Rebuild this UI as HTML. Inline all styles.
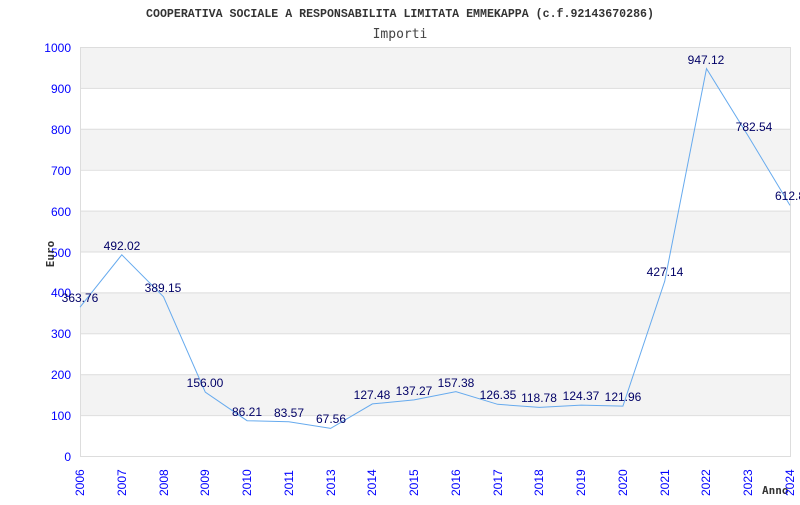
<!DOCTYPE html>
<html><head><style>
body{margin:0;background:#fff;width:800px;height:500px;overflow:hidden}
svg text{font-family:"Liberation Sans",sans-serif}
</style></head><body>
<svg width="800" height="500" xmlns="http://www.w3.org/2000/svg">
<text x="400" y="17" text-anchor="middle" style="font-family:'Liberation Mono',monospace" font-size="11.6" font-weight="bold" fill="#333">COOPERATIVA SOCIALE A RESPONSABILITA LIMITATA EMMEKAPPA (c.f.92143670286)</text>
<text x="400" y="38" text-anchor="middle" style="font-family:'DejaVu Sans Mono',monospace" font-size="13" fill="#444">Importi</text>
<g fill="#f3f3f3">
<rect x="80.5" y="47" width="710" height="40.9"/>
<rect x="80.5" y="128.8" width="710" height="40.9"/>
<rect x="80.5" y="210.6" width="710" height="40.9"/>
<rect x="80.5" y="292.4" width="710" height="40.9"/>
<rect x="80.5" y="374.2" width="710" height="40.9"/>
</g>
<g stroke="#dddddd" stroke-width="1">
<line x1="80" y1="47.5" x2="790" y2="47.5"/>
<line x1="80" y1="88.4" x2="790" y2="88.4"/>
<line x1="80" y1="129.3" x2="790" y2="129.3"/>
<line x1="80" y1="170.2" x2="790" y2="170.2"/>
<line x1="80" y1="211.1" x2="790" y2="211.1"/>
<line x1="80" y1="252" x2="790" y2="252"/>
<line x1="80" y1="292.9" x2="790" y2="292.9"/>
<line x1="80" y1="333.8" x2="790" y2="333.8"/>
<line x1="80" y1="374.7" x2="790" y2="374.7"/>
<line x1="80" y1="415.6" x2="790" y2="415.6"/>
<line x1="80" y1="456.5" x2="790" y2="456.5"/>
<line x1="80.5" y1="47" x2="80.5" y2="457"/>
<line x1="790.5" y1="47" x2="790.5" y2="457"/>
</g>
<g fill="#0000ff" font-size="12" text-anchor="end" style="font-family:'DejaVu Sans Mono',monospace">
<text x="71" y="52">1000</text><text x="71" y="93">900</text><text x="71" y="134">800</text><text x="71" y="175">700</text><text x="71" y="216">600</text><text x="71" y="257">500</text><text x="71" y="297">400</text><text x="71" y="338">300</text><text x="71" y="379">200</text><text x="71" y="420">100</text><text x="71" y="461">0</text>
</g>
<text transform="translate(54,254) rotate(-90)" text-anchor="middle" font-size="11" font-weight="bold" fill="#333" style="font-family:'DejaVu Sans Mono',monospace">Euro</text>
<text x="762" y="494" font-size="11" font-weight="bold" fill="#333" style="font-family:'DejaVu Sans Mono',monospace">Anno</text>
<g fill="#0000ff" font-size="12" style="font-family:'DejaVu Sans Mono',monospace">
<text transform="translate(84,496) rotate(-90)">2006</text>
<text transform="translate(126,496) rotate(-90)">2007</text>
<text transform="translate(168,496) rotate(-90)">2008</text>
<text transform="translate(209,496) rotate(-90)">2009</text>
<text transform="translate(251,496) rotate(-90)">2010</text>
<text transform="translate(293,496) rotate(-90)">2011</text>
<text transform="translate(335,496) rotate(-90)">2013</text>
<text transform="translate(376,496) rotate(-90)">2014</text>
<text transform="translate(418,496) rotate(-90)">2015</text>
<text transform="translate(460,496) rotate(-90)">2016</text>
<text transform="translate(502,496) rotate(-90)">2017</text>
<text transform="translate(543,496) rotate(-90)">2018</text>
<text transform="translate(585,496) rotate(-90)">2019</text>
<text transform="translate(627,496) rotate(-90)">2020</text>
<text transform="translate(669,496) rotate(-90)">2021</text>
<text transform="translate(710,496) rotate(-90)">2022</text>
<text transform="translate(752,496) rotate(-90)">2023</text>
<text transform="translate(794,496) rotate(-90)">2024</text>
</g>
<polyline fill="none" stroke="#66aaee" stroke-width="1" points="80,307.2 121.8,254.8 163.5,296.8 205.3,392.2 247.1,420.7 288.8,421.8 330.6,428.4 372.4,403.9 414.1,399.9 455.9,391.6 497.6,404.3 539.4,407.4 581.2,405.1 622.9,406.1 664.7,281.3 706.5,68.6 748.2,136 790,205.4"/>
<g fill="#000066" font-size="12" text-anchor="middle">
<text x="80" y="302">363.76</text>
<text x="122" y="250">492.02</text>
<text x="163" y="292">389.15</text>
<text x="205" y="387">156.00</text>
<text x="247" y="416">86.21</text>
<text x="289" y="417">83.57</text>
<text x="331" y="423">67.56</text>
<text x="372" y="399">127.48</text>
<text x="414" y="395">137.27</text>
<text x="456" y="387">157.38</text>
<text x="498" y="399">126.35</text>
<text x="539" y="402">118.78</text>
<text x="581" y="400">124.37</text>
<text x="623" y="401">121.96</text>
<text x="665" y="276">427.14</text>
<text x="706" y="64">947.12</text>
<text x="754" y="131">782.54</text>
<text x="790" y="200">612.8</text>
</g>
</svg>
</body></html>
